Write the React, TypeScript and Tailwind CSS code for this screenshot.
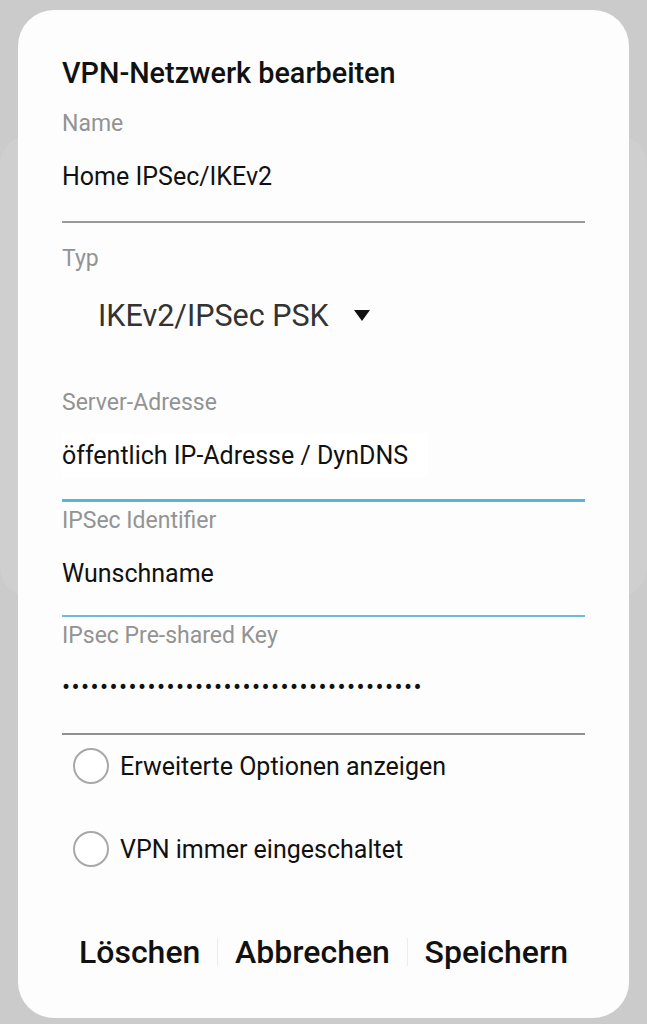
import React from "react";

const font = { fontFamily: "Roboto, 'Noto Sans', sans-serif" };

function Label({ children, mt }: { children: React.ReactNode; mt: string }) {
  return (
    <div className={`${mt} h-[30px] flex items-center text-[23px] text-[#939393] leading-none`}>{children}</div>
  );
}

function Radio({ label, mt }: { label: string; mt: string }) {
  return (
    <div className={`${mt} h-[40px] flex items-center pl-[11px]`}>
      <div className="w-[36px] h-[36px] rounded-full border-2 border-[#a8a8a8] bg-white shrink-0" />
      <span className="ml-[11px] text-[25px] text-[#111] leading-none">{label}</span>
    </div>
  );
}

export default function App() {
  return (
    <div className="relative w-[647px] h-[1024px] overflow-hidden bg-[#cbcbcb]" style={font}>
      <div className="mt-[135px] h-[462px] rounded-[30px] bg-[#cfcfcf]" />
      <div className="absolute left-[18px] top-[10px] w-[611px] h-[1008px] rounded-[36px] bg-[#fdfdfd] px-[44px] pt-[43px]">
        <div className="h-[40px] flex items-center text-[28.8px] font-medium text-[#111] leading-none">
          VPN-Netzwerk bearbeiten
        </div>
        <Label mt="mt-[15px]">Name</Label>
        <div className="mt-[18px] h-[40px] flex items-center text-[25px] text-[#111] leading-none">Home IPSec/IKEv2</div>
        <div className="mt-[25px] h-[2px] bg-[#9a9a9a]" />
        <Label mt="mt-[20px]">Typ</Label>
        <div className="mt-[23px] h-[40px] flex items-center pl-[36px] text-[30.5px] text-[#333] leading-none">
          <span>IKEv2/IPSec PSK</span>
          <svg className="ml-[25px]" width="16" height="12" viewBox="0 0 16 12">
            <polygon points="0,0 16,0 8,11" fill="#111" />
          </svg>
        </div>
        <Label mt="mt-[51px]">Server-Adresse</Label>
        <div className="mt-[18px] h-[40px] flex items-center text-[25px] text-[#111] leading-none">
          <span className="bg-white pr-[20px] py-[10px]">öffentlich IP-Adresse / DynDNS</span>
        </div>
        <div className="mt-[24px] h-[3px] bg-[#5ab4d6]" />
        <Label mt="mt-[3px]">IPSec Identifier</Label>
        <div className="mt-[18px] h-[40px] flex items-center text-[25px] text-[#111] leading-none">Wunschname</div>
        <div className="mt-[22px] h-[2px] bg-[#6cbad9]" />
        <Label mt="mt-[3px]">IPsec Pre-shared Key</Label>
        <div className="mt-[17px] h-[40px] flex items-center text-[24px] text-[#111] leading-none tracking-[1.4px]">
          ••••••••••••••••••••••••••••••••••••••
        </div>
        <div className="mt-[26px] h-[2px] bg-[#8f8f8f]" />
        <Radio label="Erweiterte Optionen anzeigen" mt="mt-[11px]" />
        <Radio label="VPN immer eingeschaltet" mt="mt-[43px]" />
        <div className="mt-[63px] h-[40px] flex items-center justify-center text-[32px] font-medium text-[#111] leading-none">
          <span className="px-[17px]">Löschen</span>
          <div className="w-[2px] h-[28px] bg-[#ececec]" />
          <span className="px-[17px]">Abbrechen</span>
          <div className="w-[2px] h-[28px] bg-[#ececec]" />
          <span className="px-[17px]">Speichern</span>
        </div>
      </div>
    </div>
  );
}
